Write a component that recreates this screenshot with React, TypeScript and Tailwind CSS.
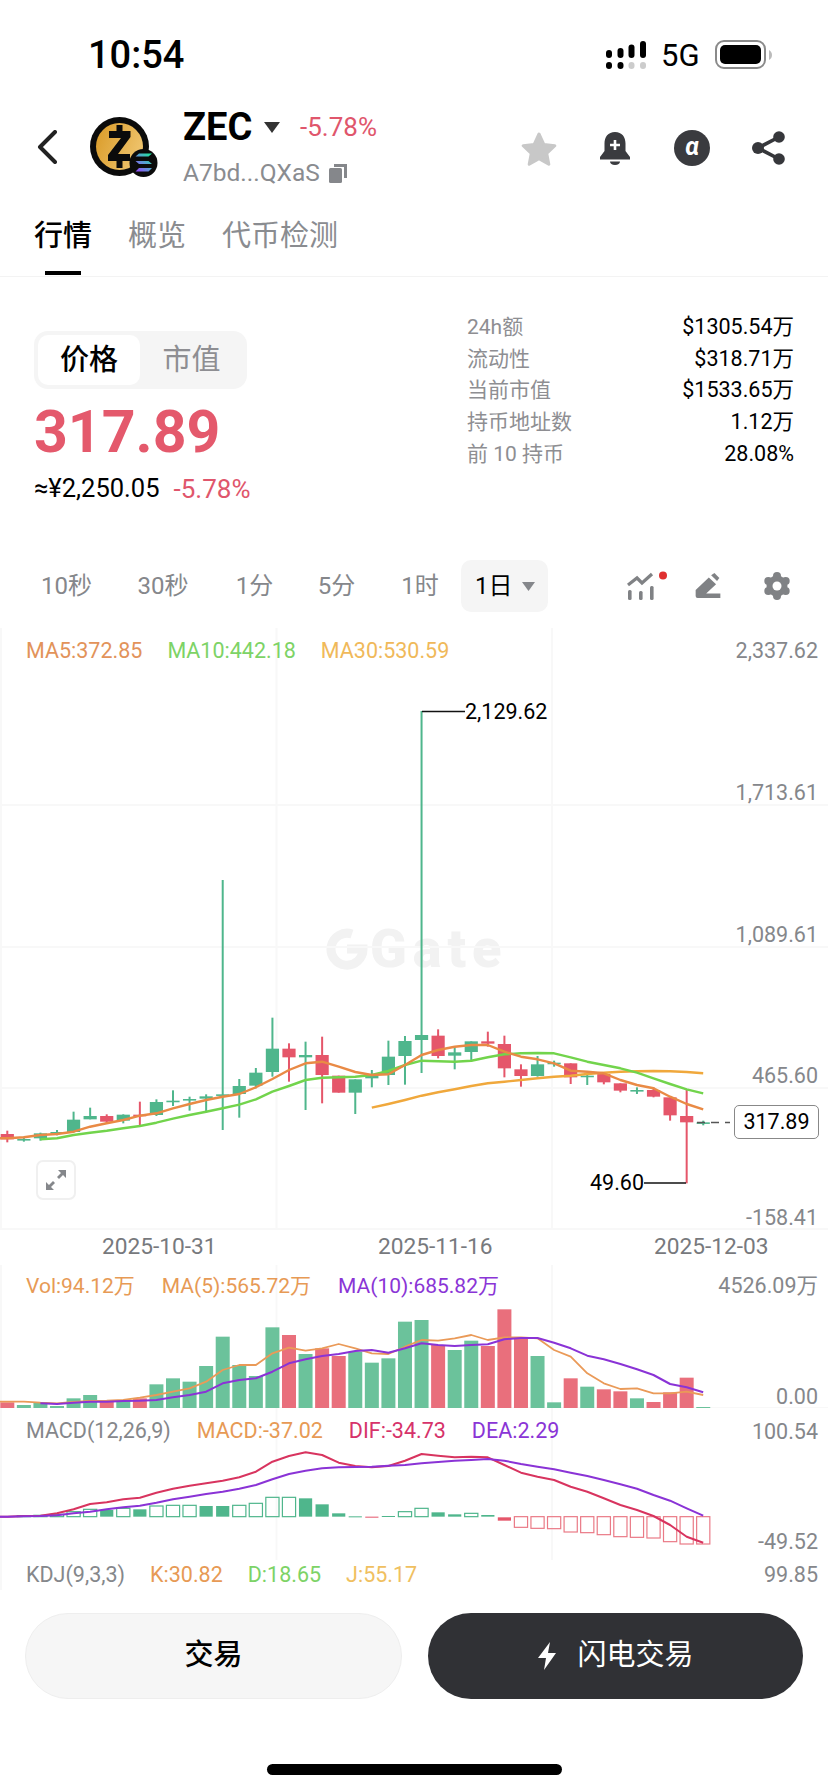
import React from "react";

const X = (i: number) => 7.3 + 16.57 * i;
const G = "#4fb68c";
const R = "#e5566a";

// [colour, wick top, wick bottom, body top, body bottom]  (y in zoom units: page y = 980 + z / 3)
const candles: [string, number, number, number, number][] = [
  [R, 452, 487, 462, 478], [G, 470, 485, 477, 480], [G, 458, 482, 460, 475], [G, 450, 466, 456, 460],
  [G, 395, 458, 419, 456], [G, 383, 418, 408, 418], [R, 403, 432, 408, 425], [G, 403, 430, 404, 422],
  [R, 365, 438, 404, 408], [G, 358, 408, 366, 405], [G, 331, 378, 362, 366], [G, 350, 392, 357, 361],
  [G, 343, 398, 349, 356], [G, -300, 450, 343, 347], [G, 297, 413, 318, 342], [G, 264, 325, 278, 317],
  [G, 113, 290, 206, 276], [R, 190, 305, 206, 232], [G, 185, 390, 225, 232], [R, 170, 370, 225, 285],
  [R, 287, 338, 287, 338], [G, 298, 402, 298, 338], [G, 270, 322, 287, 295], [G, 182, 315, 230, 285],
  [G, 168, 314, 183, 228], [G, -807, 279, 165, 180], [R, 148, 235, 167, 228], [G, 198, 268, 217, 227],
  [G, 184, 245, 184, 216], [R, 155, 200, 184, 191], [R, 167, 292, 192, 265], [R, 253, 320, 268, 288],
  [G, 228, 290, 253, 288], [G, 242, 260, 248, 251], [R, 250, 312, 250, 292], [G, 285, 315, 287, 291],
  [R, 280, 313, 282, 307], [R, 310, 337, 310, 332], [G, 322, 342, 330, 333], [R, 322, 352, 330, 350],
  [R, 352, 422, 352, 406], [R, 330, 610, 408, 427], [G, 422, 436, 427, 429],
];
const ma5 = [475,472,465,462,455,440,430,420,407,400,385,372,360,350,342,322,297,270,250,245,260,276,285,283,255,225,210,200,195,195,215,230,238,250,272,275,280,300,315,325,350,372,388];
const ma10 = [478,475,465,458,452,445,438,428,416,405,395,385,374,358,335,318,300,293,292,290,285,273,255,242,244,245,242,232,223,220,219,220,232,245,255,265,278,295,312,328,340];
const ma30 = [383,372,360,347,337,328,318,310,305,300,295,290,287,282,278,275,274,273,274,276,280];

const volTop = [457,465,458,468,445,435,452,452,445,403,385,395,348,260,345,378,232,255,312,295,318,305,338,325,215,210,285,300,272,288,178,265,318,457,385,410,418,424,445,456,427,383,471];
const volRed = new Set([0,6,8,17,19,20,26,29,30,31,34,36,37,39,40,41]);
const volMa5 = [455,455,458,460,456,453,452,450,443,435,425,415,395,360,345,345,310,293,302,295,282,295,310,312,290,270,272,265,255,270,262,262,265,300,320,370,400,417,415,430,430,425,435];
const volMa10 = [460,462,458,455,455,453,452,450,442,435,425,400,390,385,365,340,328,318,312,303,300,308,295,280,285,288,285,283,268,264,264,278,295,317,328,342,358,375,402,412,427];

const dif = [800,798,797,790,778,762,757,748,743,728,716,707,700,692,682,665,635,618,607,615,638,648,652,648,632,612,617,622,620,622,645,668,680,690,710,725,745,765,780,798,825,860,878];
const dea = [800,799,798,796,790,785,778,772,767,758,748,740,732,725,716,705,688,672,662,655,652,651,650,647,645,640,636,632,630,627,632,642,650,658,668,678,690,703,716,735,752,775,797];
// [index, top, bottom, filled]
const macdBars: [number, number, number, boolean][] = [
  [1,797,800,false],[2,796,800,false],[3,793,800,false],[4,785,800,false],[5,778,800,false],[6,780,800,true],[7,775,800,false],[8,778,800,true],
  [9,768,800,false],[10,766,800,false],[11,766,800,false],[12,768,800,true],[13,768,800,true],[14,766,800,false],[15,760,800,false],
  [16,742,800,false],[17,742,800,false],[18,745,800,true],[19,763,800,true],[20,790,800,true],[21,799,800,true],[23,798,800,true],
  [24,785,800,false],[25,775,800,false],[26,787,800,true],[27,793,800,true],[28,790,800,false],[29,795,800,true],
];
const macdRed: [number, number, number, boolean][] = [
  [22,800,802,true],[30,802,812,true],[31,800,832,false],[32,800,835,false],[33,800,836,false],[34,800,846,false],[35,800,848,false],
  [36,800,854,false],[37,800,860,false],[38,800,862,false],[39,800,864,false],[40,800,875,false],[41,800,882,false],[42,800,882,false],
];

const y1 = (z: number) => 980 + z / 3;
const y2 = (z: number) => 1250 + z / 3;
const line = (a: number[], start: number, f: (z: number) => number) => {
  const body = a.map((z, k) => `${X(start + k).toFixed(1)},${f(z).toFixed(1)}`).join(" ");
  return start === 0 ? `0,${f(a[0]).toFixed(1)} ${body}` : body;
};

const GRID = "#f8f8f8";

function VGrid({ top, bottom }: { top: number; bottom: number }) {
  return (
    <>
      <line x1="1" y1={top} x2="1" y2={bottom} stroke={GRID} strokeWidth="2" />
      <line x1="276.5" y1={top} x2="276.5" y2={bottom} stroke={GRID} strokeWidth="2" />
      <line x1="552" y1={top} x2="552" y2={bottom} stroke={GRID} strokeWidth="2" />
    </>
  );
}

function MainChart() {
  return (
    <svg viewBox="0 628 828 602" className="absolute inset-0 w-[828px] h-[602px]">
      <VGrid top={628} bottom={1230} />
      {[805, 947, 1088, 1229].map((y) => (
        <line key={y} x1="0" y1={y} x2="828" y2={y} stroke={GRID} strokeWidth="2" />
      ))}
      {candles.map(([c, wt, wb, bt, bb], i) => (
        <g key={i} fill={c}>
          <rect x={X(i) - 1} y={y1(wt)} width="2" height={(wb - wt) / 3} />
          <rect x={X(i) - 6.6} y={y1(bt)} width="13.2" height={Math.max((bb - bt) / 3, 1.6)} />
        </g>
      ))}
      <polyline points={line(ma30, 22, y1)} fill="none" stroke="#f0a83c" strokeWidth="2.4" strokeLinejoin="round" />
      <polyline points={line(ma10, 2, y1)} fill="none" stroke="#72d44c" strokeWidth="2.4" strokeLinejoin="round" />
      <polyline points={line(ma5, 0, y1)} fill="none" stroke="#e98a45" strokeWidth="2.4" strokeLinejoin="round" />
      <path d="M422 711.5H465" stroke="#111" strokeWidth="1.6" />
      <path d="M644 1183H686" stroke="#111" strokeWidth="1.6" />
      <path d="M697 1122.5H730" stroke="#555" strokeWidth="1.5" strokeDasharray="8 6" />
    </svg>
  );
}

function VolChart() {
  return (
    <svg viewBox="0 1265 828 143" className="absolute inset-0 w-[828px] h-[143px]">
      <VGrid top={1265} bottom={1408} />
      <line x1="0" y1="1408" x2="828" y2="1408" stroke={GRID} strokeWidth="2" />
      {volTop.map((z, i) => (
        <rect key={i} x={X(i) - 7} y={y2(z)} width="14" height={(475 - z) / 3} fill={volRed.has(i) ? "#e96f7c" : "#6bc29b"} />
      ))}
      <polyline points={line(volMa5, 0, y2)} fill="none" stroke="#ea9a58" strokeWidth="1.8" strokeLinejoin="round" />
      <polyline points={line(volMa10, 2, y2)} fill="none" stroke="#8a33d6" strokeWidth="2" strokeLinejoin="round" />
    </svg>
  );
}

function MacdChart() {
  const bar = ([i, t, b, filled]: [number, number, number, boolean], color: string) => (
    <rect
      key={i}
      x={X(i) - 6.6}
      y={y2(t)}
      width="13.2"
      height={Math.max((b - t) / 3, 1)}
      fill={filled ? color : "none"}
      stroke={filled ? "none" : color}
      strokeWidth="1.2"
    />
  );
  return (
    <svg viewBox="0 1408 828 152" className="absolute inset-0 w-[828px] h-[152px]">
      <VGrid top={1408} bottom={1560} />
      {macdBars.map((b) => bar(b, G))}
      {macdRed.map((b) => bar(b, b[3] ? "#e5566a" : "#ea7a86"))}
      <polyline points={line(dif, 0, y2)} fill="none" stroke="#d8345f" strokeWidth="2" strokeLinejoin="round" />
      <polyline points={line(dea, 0, y2)} fill="none" stroke="#8a33d6" strokeWidth="2" strokeLinejoin="round" />
    </svg>
  );
}

function Logo() {
  return (
    <svg viewBox="0 0 68 62" className="w-[68px] h-[62px] shrink-0">
      <defs>
        <linearGradient id="gold" x1="0" y1="0" x2="1" y2="0.4">
          <stop offset="0" stopColor="#d99a26" />
          <stop offset="1" stopColor="#eec26a" />
        </linearGradient>
        <linearGradient id="sol" x1="0" y1="1" x2="1" y2="0">
          <stop offset="0" stopColor="#9945ff" />
          <stop offset="0.5" stopColor="#5b9bd5" />
          <stop offset="1" stopColor="#14f195" />
        </linearGradient>
      </defs>
      <circle cx="29.5" cy="30.5" r="29.5" fill="#0b0b0b" />
      <circle cx="29.5" cy="30.5" r="23.5" fill="url(#gold)" />
      <path d="M26.5 9h6v6h8v6L28 38h12v7h-7.5v7h-6v-7H18v-6l13-17H19v-7h7.5z" fill="#0b0b0b" />
      <circle cx="53.5" cy="47" r="14" fill="#0b0b0b" />
      <path d="M45.5 40.5h13l3.5-3h-13zM45.5 45h13l3.5 3h-13zM45.5 55.5h13l3.5-3.5h-13z" fill="url(#sol)" />
    </svg>
  );
}

function Axis({ className, children }: { className: string; children: React.ReactNode }) {
  return <span className={`absolute right-[10px] leading-[24px] text-[21.5px] text-[#85878b] ${className}`}>{children}</span>;
}

export default function App() {
  return (
    <div className="w-[828px] h-[1792px] bg-white flex flex-col overflow-hidden text-black font-['Roboto','Noto_Sans_CJK_SC',sans-serif]">
      {/* status bar */}
      <div className="h-[110px] flex items-center justify-between pl-[88px] pr-[56px] shrink-0">
        <span className="text-[38px] font-medium leading-none">10:54</span>
        <div className="flex items-center">
          <svg viewBox="606 41 41 28" className="w-[41px] h-[28px]">
            <rect x="606" y="50" width="6" height="8" rx="3" />
            <rect x="617.5" y="48" width="6" height="10" rx="3" />
            <rect x="628.5" y="44.5" width="6" height="13.5" rx="3" />
            <rect x="640" y="41" width="6" height="17" rx="3" />
            <rect x="606" y="62" width="6" height="7" rx="3" />
            <rect x="617.5" y="62" width="6" height="7" rx="3" />
            <rect x="628.5" y="62" width="6" height="7" rx="3" fill="#ccc" />
            <rect x="640" y="62" width="6" height="7" rx="3" fill="#ccc" />
          </svg>
          <span className="ml-[14px] w-[40px] text-[31px] leading-none">5G</span>
          <svg viewBox="715 40 57 30" className="ml-[14px] w-[57px] h-[30px]">
            <rect x="716" y="41" width="49" height="27" rx="8" fill="none" stroke="#8a8a8a" strokeWidth="2" />
            <rect x="720" y="45" width="41" height="19" rx="5" />
            <path d="M769 50c2 1 3 3 3 5s-1 4-3 5z" fill="#bbb" />
          </svg>
        </div>
      </div>

      {/* header */}
      <div className="h-[80px] flex items-start shrink-0">
        <svg viewBox="0 0 20 34" className="ml-[37px] mt-[20px] w-[20px] h-[34px]" fill="none" stroke="#222" strokeWidth="4" strokeLinecap="round" strokeLinejoin="round">
          <path d="M18 2 3 17l15 15" />
        </svg>
        <div className="ml-[33px] mt-[6px]">
          <Logo />
        </div>
        <div className="ml-[25px] flex flex-col">
          <div className="h-[34px] flex items-center">
            <span className="w-[71px] text-[38px] font-bold leading-none">ZEC</span>
            <svg viewBox="0 0 16 11" className="ml-[10px] w-[16px] h-[11px]"><path d="M0 0h16L8 11z" fill="#333" /></svg>
            <span className="ml-[20px] text-[26px] leading-none text-[#e0566c]">-5.78%</span>
          </div>
          <div className="mt-[14px] h-[30px] flex items-center">
            <span className="text-[24.5px] leading-none text-[#8a8c90]">A7bd...QXaS</span>
            <svg viewBox="0 0 18 19" className="ml-[9px] w-[18px] h-[19px]" fill="#85878b">
              <path d="M5 0h13v14h-3V3H5z" />
              <rect x="0" y="4" width="13" height="15" rx="1.5" />
            </svg>
          </div>
        </div>
        <div className="ml-auto mr-[43px] mt-[20px] flex items-center h-[36px]">
          <svg viewBox="0 0 36 35" className="w-[36px] h-[35px]">
            <path d="M18 3l4.8 10.4 11 1.3-8.1 7.6 2.1 11L18 27.8 8.2 33.3l2.1-11-8.1-7.6 11-1.3z" fill="#c8c8c8" stroke="#c8c8c8" strokeWidth="3" strokeLinejoin="round" />
          </svg>
          <svg viewBox="0 0 32 34" className="ml-[42px] w-[32px] h-[34px]">
            <path d="M16 1c-7 0-10.500 5-10.500 11.500V20L1 26v2.500h30V26l-4.500-6v-7.500C26.500 6 23 1 16 1z" fill="#3a3b3f" />
            <path d="M11 30.500h10c0 2-2 3.500-5 3.500s-5-1.500-5-3.500z" fill="#3a3b3f" />
            <path d="M16 9v10M11 14h10" stroke="#fff" strokeWidth="2.600" />
          </svg>
          <div className="ml-[43px] w-[36px] h-[36px] rounded-full bg-[#3a3b3f] flex items-center justify-center text-white italic font-bold text-[25px] leading-none pb-[3px]">α</div>
          <svg viewBox="0 0 33 34" className="ml-[42px] w-[33px] h-[34px]" fill="#36373b">
            <path d="M27 6 6 17l21 11" fill="none" stroke="#36373b" strokeWidth="3.600" />
            <circle cx="27" cy="6" r="5.800" />
            <circle cx="6" cy="17" r="6" />
            <circle cx="27" cy="28" r="5.800" />
          </svg>
        </div>
      </div>

      {/* tabs */}
      <div className="h-[87px] shrink-0 border-b border-[#f3f3f3] flex items-start gap-[36px] pl-[34px] pt-[26px] text-[29px] leading-[40px] text-[#8a8c90]">
        <div className="flex flex-col items-center text-black font-medium">
          <span>行情</span>
          <div className="mt-[15px] w-[36px] h-[4px] bg-black" />
        </div>
        <span>概览</span>
        <span>代币检测</span>
      </div>

      {/* price + stats */}
      <div className="h-[269px] shrink-0 flex items-start justify-between">
        <div className="pl-[34px] pt-[54px] flex flex-col items-start">
          <div className="w-[213px] h-[58px] bg-[#f5f5f5] rounded-[14px] p-[4px] flex items-center text-[29px] leading-none">
            <div className="w-[102px] h-[50px] bg-white rounded-[10px] flex items-center justify-center font-medium">价格</div>
            <div className="flex-1 flex items-center justify-center text-[#8e8e92]">市值</div>
          </div>
          <div className="mt-[12px] h-[60px] flex items-center text-[59px] font-bold leading-none text-[#e4596c]">317.89</div>
          <div className="mt-[13px] h-[30px] flex items-center text-[25.5px] leading-none">
            <span>≈¥2,250.05</span>
            <span className="ml-[14px] text-[26px] text-[#e0566c]">-5.78%</span>
          </div>
        </div>
        <div className="w-[327px] mr-[34px] pt-[34px] flex flex-col text-[21px] leading-[32px]">
          {[
            ["24h额", "$1305.54万"],
            ["流动性", "$318.71万"],
            ["当前市值", "$1533.65万"],
            ["持币地址数", "1.12万"],
            ["前 10 持币", "28.08%"],
          ].map(([k, v]) => (
            <div key={k} className="flex justify-between h-[31.750px] items-center">
              <span className="text-[#8e8e92]">{k}</span>
              <span className="text-[21.5px]">{v}</span>
            </div>
          ))}
        </div>
      </div>

      {/* time frames */}
      <div className="h-[82px] pb-[2px] shrink-0 flex items-center pl-[18px] text-[24px] leading-none text-[#85878b]">
        <span className="w-[97px] text-center">10秒</span>
        <span className="w-[96px] text-center">30秒</span>
        <span className="w-[87px] text-center">1分</span>
        <span className="w-[77px] text-center">5分</span>
        <span className="w-[86px] pl-[4px] text-center">1时</span>
        <div className="w-[87px] h-[52px] bg-[#f5f5f5] rounded-[10px] flex items-center pl-[14px] text-black">
          1日
          <svg viewBox="0 0 13 9" className="ml-[9px] w-[13px] h-[9px]"><path d="M0 0h13L6.500 9z" fill="#85878b" /></svg>
        </div>
        <svg viewBox="628 570 44 30" className="ml-[79px] w-[44px] h-[30px]" fill="#808285">
          <rect x="629" y="589" width="3.600" height="10" rx="1.500" />
          <rect x="640" y="590" width="3.600" height="9" rx="1.500" />
          <rect x="651" y="585" width="3.600" height="14" rx="1.500" />
          <path d="M629 584l9-7 5 5 10-9" fill="none" stroke="#808285" strokeWidth="3.200" />
          <circle cx="664" cy="574.500" r="4" fill="#e03030" />
        </svg>
        <svg viewBox="285 95 85 85" className="ml-[23px] w-[28px] h-[28px]" fill="#808285">
          <path d="M290 150 330 112l22 20-30 28h43v14H296q-6 0-6-6z" />
          <path d="M337 105l10-7 15 15-7 9z" />
        </svg>
        <svg viewBox="0 0 28 28" className="ml-[41px] w-[28px] h-[28px]" fill="#808285">
          <circle cx="14" cy="14" r="10.500" />
          <circle cx="14" cy="4" r="4" />
          <circle cx="14" cy="24" r="4" />
          <circle cx="5.300" cy="9" r="4" />
          <circle cx="22.700" cy="9" r="4" />
          <circle cx="5.300" cy="19" r="4" />
          <circle cx="22.700" cy="19" r="4" />
          <circle cx="14" cy="14" r="4.500" fill="#fff" />
        </svg>
      </div>

      {/* main chart */}
      <div className="relative h-[602px] shrink-0">
        <div className="absolute left-[326px] top-[294px] flex items-center text-[#f2f2f2]">
          <svg viewBox="0 0 42 42" className="w-[42px] h-[42px]" fill="none" stroke="#f2f2f2" strokeWidth="9">
            <path d="M26 6a16 16 0 1 0 11 15H21" />
          </svg>
          <span className="ml-[2px] text-[54px] font-black tracking-[6px] leading-none">Gate</span>
        </div>
        <MainChart />
        <div className="relative flex gap-[25px] pl-[26px] pt-[11px] text-[21.5px] leading-[24px]">
          <span className="text-[#e2935a]">MA5:372.85</span>
          <span className="text-[#7dd366]">MA10:442.18</span>
          <span className="text-[#f0b95a]">MA30:530.59</span>
        </div>
        <Axis className="top-[11px]">2,337.62</Axis>
        <Axis className="top-[153px]">1,713.61</Axis>
        <Axis className="top-[295px]">1,089.61</Axis>
        <Axis className="top-[436px]">465.60</Axis>
        <Axis className="top-[578px]">-158.41</Axis>
        <span className="absolute left-[465px] top-[72px] text-[21.5px] leading-[24px]">2,129.62</span>
        <span className="absolute left-[590px] top-[543px] text-[21.5px] leading-[24px]">49.60</span>
        <div className="absolute left-[734px] top-[477px] w-[85px] h-[34px] border border-[#888] rounded-[5px] bg-white flex items-center justify-center text-[21.5px] leading-none">317.89</div>
        <div className="absolute left-[36px] top-[532px] w-[40px] h-[40px] border-2 border-[#f0f0f0] rounded-[7px] bg-white flex items-center justify-center">
          <svg viewBox="0 0 20 20" className="w-[20px] h-[20px]" fill="#85878b">
            <path d="M20 0v8l-3-3-4 4-2-2 4-4-3-3zM0 20v-8l3 3 4-4 2 2-4 4 3 3z" />
          </svg>
        </div>
      </div>

      {/* dates */}
      <div className="h-[35px] shrink-0 flex items-center text-[22.7px] leading-none text-[#77797d] pl-[102px]">
        <span className="w-[276px]">2025-10-31</span>
        <span className="w-[276px]">2025-11-16</span>
        <span>2025-12-03</span>
      </div>

      {/* volume */}
      <div className="relative h-[143px] shrink-0">
        <VolChart />
        <div className="relative flex gap-[27px] pl-[26px] pt-[9px] text-[21px] leading-[24px]">
          <span className="text-[#e79a55]">Vol:94.12万</span>
          <span className="text-[#e79a55]">MA(5):565.72万</span>
          <span className="text-[#8a35d6]">MA(10):685.82万</span>
        </div>
        <Axis className="top-[9px]">4526.09万</Axis>
        <Axis className="top-[120px]">0.00</Axis>
      </div>

      {/* MACD */}
      <div className="relative h-[152px] shrink-0">
        <MacdChart />
        <div className="relative flex gap-[26px] pl-[26px] pt-[11px] text-[21.5px] leading-[24px]">
          <span className="text-[#85878b]">MACD(12,26,9)</span>
          <span className="text-[#e79a55]">MACD:-37.02</span>
          <span className="text-[#d6336a]">DIF:-34.73</span>
          <span className="text-[#8a35d6]">DEA:2.29</span>
        </div>
        <Axis className="top-[12px]">100.54</Axis>
        <Axis className="top-[122px]">-49.52</Axis>
      </div>

      {/* KDJ */}
      <div className="relative h-[30px] shrink-0 border-l-2 border-[#f8f8f8]">
        <div className="flex gap-[25px] pl-[24px] pt-[3px] text-[21.5px] leading-[24px]">
          <span className="text-[#85878b]">KDJ(9,3,3)</span>
          <span className="text-[#e79a55]">K:30.82</span>
          <span className="text-[#7dd366]">D:18.65</span>
          <span className="text-[#f0c060]">J:55.17</span>
        </div>
        <Axis className="top-[3px]">99.85</Axis>
      </div>

      {/* actions */}
      <div className="pt-[23px] px-[25px] flex gap-[26px] shrink-0">
        <button className="flex-1 h-[86px] rounded-full bg-[#f6f6f6] border border-[#eeeeee] text-[29px] font-medium flex items-center justify-center">交易</button>
        <button className="flex-1 h-[86px] rounded-full bg-[#303135] text-white text-[29px] flex items-center justify-center">
          <svg viewBox="0 0 20 28" className="w-[20px] h-[28px] mr-[20px]" fill="#fff"><path d="M13 0 1 16h8L7 28l12-17h-8z" /></svg>
          闪电交易
        </button>
      </div>

      {/* home indicator */}
      <div className="mt-[65px] mx-auto w-[295px] h-[11px] rounded-full bg-black shrink-0" />
    </div>
  );
}
